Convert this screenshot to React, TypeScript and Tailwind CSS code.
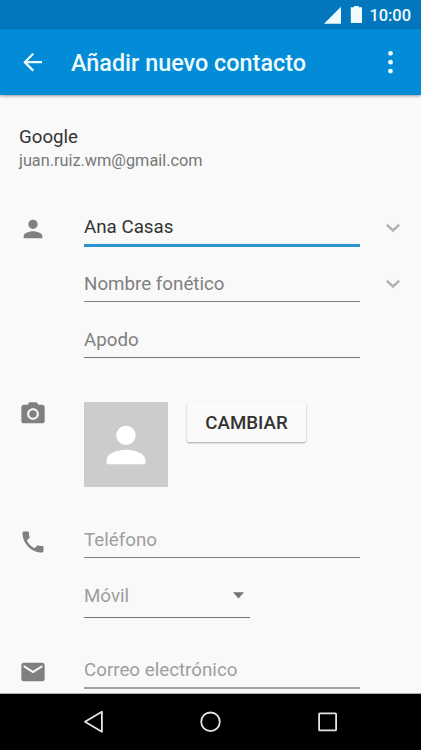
import type { ReactNode } from 'react';
import { MdCameraAlt, MdEmail, MdPerson, MdPhone } from 'react-icons/md';

interface SectionProps {
  icon: ReactNode;
  className?: string;
  children: ReactNode;
}

const Section = ({ icon, className = '', children }: SectionProps) => (
  <section className={`flex items-start ${className}`}>
    <div className="w-[84px] shrink-0 pl-[18.7px] text-[#808080]">{icon}</div>
    {children}
  </section>
);

interface FieldProps {
  label: string;
  className: string;
}

const Field = ({ label, className }: FieldProps) => (
  <div className={`w-[276px] text-[18.75px] leading-6 whitespace-nowrap ${className}`}>{label}</div>
);

const Chevron = () => (
  <svg className="w-4 h-[10px]" viewBox="0 0 16 10" fill="none">
    <path d="M1.7 1.6L8 7.5L14.3 1.6" stroke="#b2b2b2" strokeWidth="2.4" />
  </svg>
);

const StatusBar = () => (
  <div className="h-[29px] shrink-0 bg-[#0277bd] flex items-start justify-end pr-[10px] text-[#effcff]">
    <svg className="w-[18px] h-[18px] mt-[6px]" viewBox="0 0 18 18">
      <path d="M18 0.7V17.7H1Z" fill="#effcff" />
    </svg>
    <svg className="w-3 h-[18px] mt-[6px] ml-[9px]" viewBox="0 0 12 18">
      <path d="M4 0H8.7V1.2H12V17H0.8V1.2H4Z" fill="#effcff" />
    </svg>
    <span className="ml-[7px] mt-[6px] w-[42px] text-[16.4px] leading-5 font-medium text-right whitespace-nowrap">10:00</span>
  </div>
);

const AppBar = () => (
  <header className="relative h-[66px] shrink-0 bg-[#028bd6] flex items-center pl-[19px] pr-4 text-[#effcff] shadow-[0_1px_3px_rgba(0,0,0,0.4)]">
    <svg className="w-7 h-7" viewBox="0 0 28 28" fill="none" stroke="currentColor" strokeWidth="2.2">
      <path d="M23 14.2H6.2M14.2 5.8L5.8 14.2L14.2 22.6" />
    </svg>
    <h1 className="ml-6 mt-[2px] flex-1 text-[23.4px] leading-7 font-medium whitespace-nowrap">Añadir nuevo contacto</h1>
    <svg className="w-7 h-7" viewBox="0 0 28 28" fill="currentColor">
      <circle cx="13.5" cy="5.3" r="2.4" />
      <circle cx="13.5" cy="14.2" r="2.4" />
      <circle cx="13.5" cy="23.1" r="2.4" />
    </svg>
  </header>
);

const NavBar = () => (
  <nav className="h-14 shrink-0 bg-black flex items-center">
    <svg className="w-6 h-6 ml-[81px]" viewBox="0 0 24 24" fill="none" stroke="#e4e4e4" strokeWidth="1.8">
      <path d="M20.9 1.8V21.8L4 11.8Z" strokeLinejoin="round" />
    </svg>
    <svg className="w-6 h-6 ml-[93px]" viewBox="0 0 24 24" fill="none" stroke="#e4e4e4" strokeWidth="1.8">
      <circle cx="12.5" cy="11.8" r="9.3" />
    </svg>
    <svg className="w-6 h-6 ml-[93px]" viewBox="0 0 24 24" fill="none" stroke="#e4e4e4" strokeWidth="1.8">
      <rect x="4.1" y="3.3" width="17" height="17" rx="0.6" />
    </svg>
  </nav>
);

const App = () => {
  return (
    <div className="w-[421px] h-[750px] flex flex-col overflow-hidden bg-[#f9f9f9] font-['Roboto',sans-serif]">
      <StatusBar />
      <AppBar />

      <main className="flex-1 min-h-0 overflow-hidden border-b border-[#b0b0b0] text-[#808080]">
        <div className="pt-[30px] pl-[19px] whitespace-nowrap">
          <p className="text-[18.7px] leading-6 text-[#333333]">Google</p>
          <p className="mt-[2px] text-[16.3px] leading-5 text-[#777777]">juan.ruiz.wm@gmail.com</p>
        </div>

        {/* Name */}
        <Section icon={<MdPerson className="w-7 h-7" />} className="mt-11">
          <div className="flex flex-col">
            <div className="flex items-start">
              <Field label="Ana Casas" className="h-8 border-b-[3px] border-[#2b93d1] text-[#333333]" />
              <div className="ml-[25px] mt-2"><Chevron /></div>
            </div>
            <div className="mt-[25px] flex items-start">
              <Field label="Nombre fonético" className="h-[30px] border-b border-[#808080]" />
              <div className="ml-[25px] mt-[7px]"><Chevron /></div>
            </div>
            <Field label="Apodo" className="mt-[26px] h-[30px] border-b border-[#777777]" />
          </div>
        </Section>

        {/* Photo */}
        <Section icon={<MdCameraAlt className="w-7 h-7 -mt-[1.7px]" />} className="mt-[44px]">
          <div className="w-[84px] h-[85px] bg-[#cccccc] flex items-center justify-center">
            <MdPerson className="w-[58px] h-[58px] text-white" />
          </div>
          <button className="ml-[19px] mt-px w-[119px] h-[39px] pt-[2px] rounded-[2px] bg-[#fafafa] text-[18.7px] font-medium text-[#333333] shadow-[0_1px_2px_rgba(0,0,0,0.35)]">
            CAMBIAR
          </button>
        </Section>

        {/* Phone */}
        <Section icon={<MdPhone className="w-7 h-7" />} className="mt-[41px]">
          <div className="flex flex-col">
            <Field label="Teléfono" className="h-[30px] border-b border-[#808080] text-[#9e9e9e]" />
            <div className="mt-[26px] w-[166px] h-[34px] border-b border-[#777777] flex items-start justify-between pr-[6px] text-[18.75px] leading-6 text-[#9e9e9e]">
              <span>Móvil</span>
              <svg className="w-[11px] h-[7px] mt-2" viewBox="0 0 11 7">
                <path d="M0 0.3H11L5.5 6.6Z" fill="#747474" />
              </svg>
            </div>
          </div>
        </Section>

        {/* Email */}
        <Section icon={<MdEmail className="w-7 h-7" />} className="mt-10">
          <Field label="Correo electrónico" className="h-[31px] border-b-2 border-[#a3a3a3] text-[#9e9e9e]" />
        </Section>
      </main>

      <NavBar />
    </div>
  );
};

export default App;
